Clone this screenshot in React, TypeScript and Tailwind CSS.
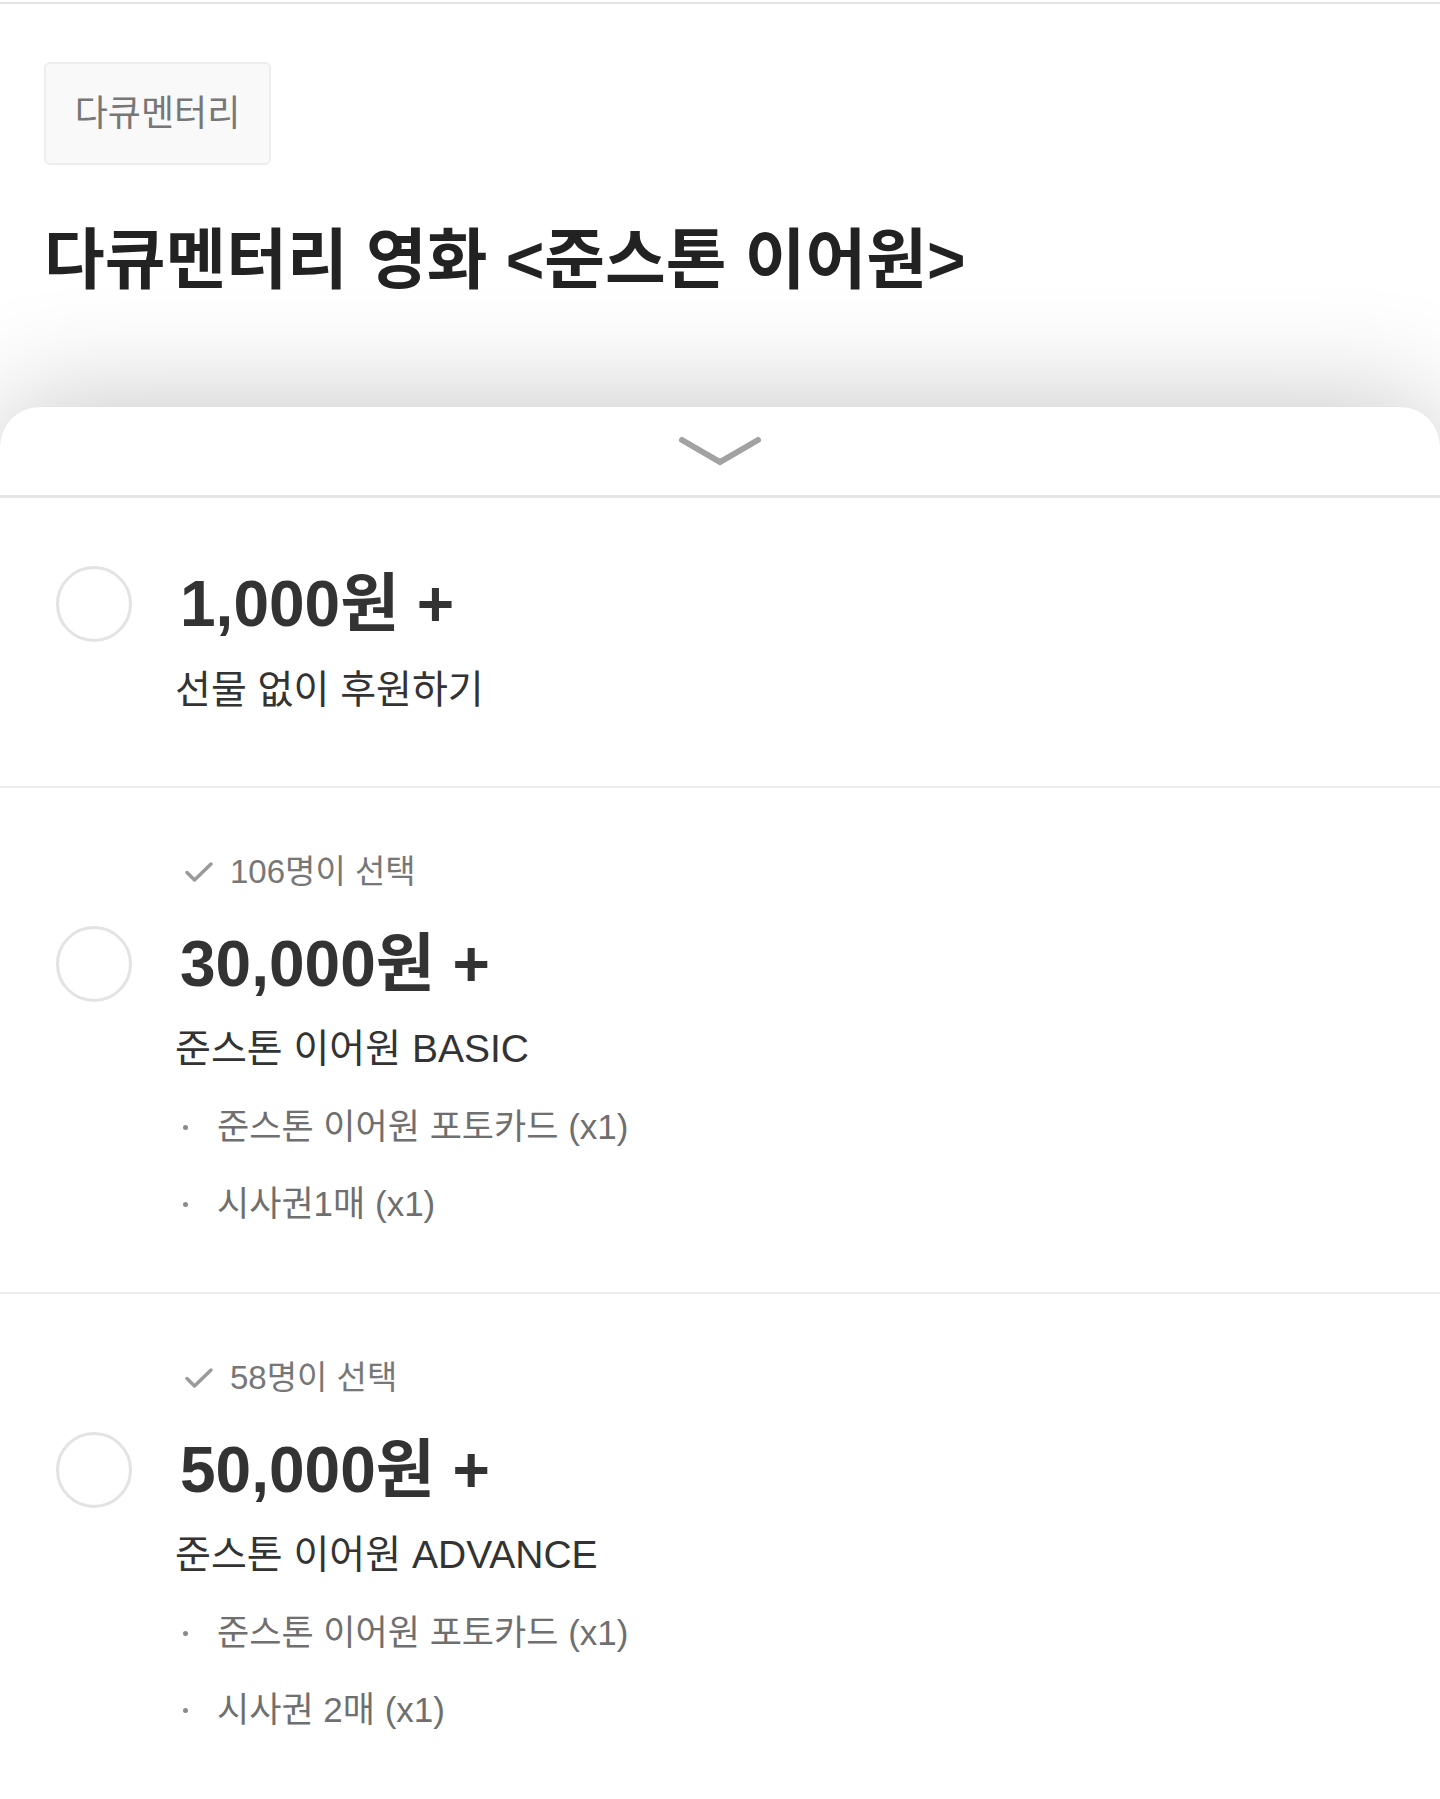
import type { ReactNode } from 'react';

type Reward = {
    price: string;
    picked?: string;
    title: string;
    items?: string[];
};

const rewards: Reward[] = [
    { price: '1,000원 +', title: '선물 없이 후원하기' },
    {
        price: '30,000원 +',
        picked: '106명이 선택',
        title: '준스톤 이어원 BASIC',
        items: ['준스톤 이어원 포토카드 (x1)', '시사권1매 (x1)'],
    },
    {
        price: '50,000원 +',
        picked: '58명이 선택',
        title: '준스톤 이어원 ADVANCE',
        items: ['준스톤 이어원 포토카드 (x1)', '시사권 2매 (x1)'],
    },
];

// left slot (radio) + text column, same grid for every line of a reward
function Row({ left, className, children }: { left?: ReactNode; className?: string; children: ReactNode }) {
    return (
        <div className={`flex items-center gap-[43px] ${className ?? ''}`}>
            <div className="flex w-[76px] shrink-0 justify-center">{left}</div>
            <div className="flex min-w-0 items-center">{children}</div>
        </div>
    );
}

function RewardItem({ reward, last }: { reward: Reward; last?: boolean }) {
    return (
        <div className={`pl-[56px] ${reward.picked ? 'pt-[60px]' : 'pt-[66px]'} ${last ? 'pb-[60px]' : 'border-b-2 border-[#ededed]'} ${!last && reward.items ? 'pb-[63px]' : ''} ${!reward.items ? 'pb-[71px]' : ''}`}>
            {reward.picked && (
                <Row className="h-[48px]">
                    <svg width="30" height="22" viewBox="0 0 30 22" fill="none" className="ml-[9px]">
                        <path d="M3 11.5 L10.5 19 L27 3" stroke="#9a9a9a" strokeWidth="3.5" strokeLinecap="round" strokeLinejoin="round" />
                    </svg>
                    <span className="ml-[16px] text-[33px] leading-[48px] text-[#777777]">{reward.picked}</span>
                </Row>
            )}

            <Row
                className={`h-[80px] ${reward.picked ? 'mt-[28px]' : ''}`}
                left={<div className="h-[76px] w-[76px] rounded-full border-[3px] border-[#e3e3e3] bg-white" />}
            >
                <span className="ml-[5px] text-[64px] font-bold leading-[80px] text-[#333333]">{reward.price}</span>
            </Row>

            <Row className={`h-[50px] ${reward.picked ? 'mt-[20px]' : 'mt-[21px]'}`}>
                <span className="text-[39px] leading-[50px] text-[#333333]">{reward.title}</span>
            </Row>

            {reward.items && (
                <div className="mt-[28px] flex flex-col gap-[27px]">
                    {reward.items.map((item) => (
                        <Row key={item} className="h-[50px]">
                            <span className="ml-[8px] h-[5px] w-[5px] rounded-full bg-[#8a8a8a]" />
                            <span className="ml-[29px] text-[35px] leading-[50px] text-[#6f6f6f]">{item}</span>
                        </Row>
                    ))}
                </div>
            )}
        </div>
    );
}

export default function App() {
    return (
        <div className="flex min-h-[1799px] flex-col overflow-hidden bg-white font-['Liberation_Sans','Noto_Sans_CJK_KR',sans-serif]">
            {/* top hairline */}
            <div className="mt-[2px] h-[2px] bg-[#e3e3e3]" />

            {/* Project header */}
            <div className="px-[44px] pt-[58px]">
                <div className="flex h-[103px] w-[227px] items-center justify-center rounded-md border-2 border-[#ededed] bg-[#f9f9f9] text-[36px] text-[#777777]">
                    다큐멘터리
                </div>
                <h1 className="mt-[55px] text-[66px] font-bold leading-[80px] text-[#222222]">
                    {'다큐멘터리 영화 <준스톤 이어원>'}
                </h1>
            </div>

            {/* Reward sheet */}
            <div className="mt-[107px] flex-1 rounded-t-[40px] bg-white shadow-[0_0_120px_rgba(0,0,0,0.24)]">
                <div className="flex h-[88px] items-center justify-center">
                    <svg width="84" height="32" viewBox="0 0 84 32" fill="none">
                        <path d="M4 5 L42 27 L80 5" stroke="#a2a2a2" strokeWidth="6" strokeLinecap="round" strokeLinejoin="miter" />
                    </svg>
                </div>
                <div className="h-[3px] bg-[#e6e6e6]" />

                {rewards.map((r, i) => (
                    <RewardItem key={r.price} reward={r} last={i === rewards.length - 1} />
                ))}
            </div>
        </div>
    );
}
